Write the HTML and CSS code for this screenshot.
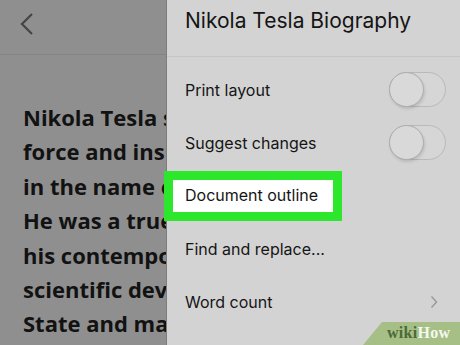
FILE: index.html
```html
<!DOCTYPE html>
<html lang="en">
<head>
    <meta charset="UTF-8">
    <meta name="viewport" content="width=device-width, initial-scale=1.0">
    <title>Nikola Tesla Biography</title>
    <link rel="stylesheet" href="styles.css">
</head>
<body>
    <div class="screen">
        <div class="doc">
            <div class="doc-header">
                <svg class="back" width="16" height="24" viewBox="0 0 16 24">
                    <path d="M13 2 L3 12 L13 22" fill="none" stroke="#454545" stroke-width="2.2"/>
                </svg>
            </div>
            <div class="doc-body">
                <p>Nikola Tesla set the stage</p>
                <p>force and inspiration</p>
                <p>in the name of science.</p>
                <p>He was a true genius</p>
                <p>his contemporaries</p>
                <p>scientific developments</p>
                <p>State and many others</p>
            </div>
        </div>

        <div class="drawer">
            <div class="drawer-header">
                <h2>Nikola Tesla Biography</h2>
            </div>
            <ul class="menu">
                <li class="menu-item">
                    <span>Print layout</span>
                    <span class="toggle"><span class="knob"></span></span>
                </li>
                <li class="menu-item">
                    <span>Suggest changes</span>
                    <span class="toggle"><span class="knob"></span></span>
                </li>
                <li class="menu-item">
                    <span class="highlight">Document outline</span>
                </li>
                <li class="menu-item">
                    <span>Find and replace...</span>
                </li>
                <li class="menu-item">
                    <span>Word count</span>
                    <svg class="chevron" width="8" height="14" viewBox="0 0 8 14">
                        <path d="M1.5 1.5 L6.5 7 L1.5 12.5" fill="none" stroke="#9a9a9a" stroke-width="1.5"/>
                    </svg>
                </li>
            </ul>
        </div>

        <!-- watermark sits over the corner -->
        <div class="watermark"><span class="wiki">wiki</span><span class="how">How</span></div>
    </div>
</body>
</html>
```

FILE: styles.css
```css
html, body {
    margin: 0;
    padding: 0;
    width: 460px;
    height: 345px;
    overflow: hidden;
}
.screen {
    position: relative;
    display: grid;
    grid-template-columns: 166px 1fr;
    height: 345px;
    overflow: hidden;
}
.doc {
    background-color: #8f8f8f;
    overflow: hidden;
}
.doc-header {
    height: 55px;
    border-bottom: 1px solid #848484;
    box-sizing: border-box;
    padding: 12px 0 0 19px;
}
.back {
    display: block;
}
.doc-body {
    padding: 45px 0 0 23px;
    font-family: "Open Sans", "Liberation Sans", sans-serif;
    font-weight: 700;
    font-size: 22px;
    line-height: 34.4px;
    color: #121212;
    white-space: nowrap;
}
.doc-body p {
    margin: 0;
}
.drawer {
    background-color: #d3d3d3;
    border-left: 1px solid #7d7d7d;
    font-family: Inter, "Noto Sans", sans-serif;
    color: #151515;
}
.drawer-header {
    height: 57px;
    box-sizing: border-box;
    padding: 8px 0 0 18px;
    border-bottom: 1px solid #c6c6c6;
}
h2 {
    margin: 0;
    font-size: 21px;
    line-height: 25px;
    font-weight: 400;
}
.menu {
    list-style: none;
    margin: 0;
    padding: 6px 0 0 0;
}
.menu-item {
    display: flex;
    align-items: center;
    justify-content: space-between;
    height: 53px;
    padding: 0 14px 0 18px;
    font-size: 16px;
    line-height: 20px;
}
.highlight {
    margin-left: -21px;
    padding: 5px 15px 7px 12px;
    background-color: #fff;
    border: 9px solid #2ce72c;
}
.toggle {
    position: relative;
    width: 55px;
    height: 33px;
    border: 1px solid #b9b9b9;
    border-radius: 18px;
    background-color: #d6d6d6;
}
.knob {
    position: absolute;
    left: -1px;
    top: -1px;
    width: 33px;
    height: 33px;
    border-radius: 50%;
    border: 1px solid #adadad;
    background-color: #d9d9d9;
    box-shadow: 1px 2px 3px rgba(0, 0, 0, 0.12);
}
.chevron {
    margin-right: 8px;
}
.watermark {
    position: absolute;
    right: 0;
    bottom: 0;
    width: 97px;
    height: 23px;
    background-color: #a6bf87;
    clip-path: polygon(19px 0, 100% 0, 100% 100%, 0 100%);
    box-sizing: border-box;
    padding: 2px 0 0 24px;
    font-family: "Liberation Serif", serif;
    font-weight: 700;
    font-size: 16px;
    line-height: 18px;
    letter-spacing: 0.3px;
}
.wiki {
    color: #4c6a36;
}
.how {
    color: #f4f8ee;
}
```
